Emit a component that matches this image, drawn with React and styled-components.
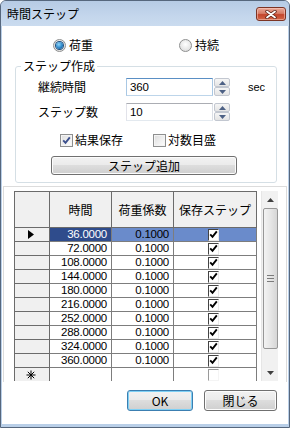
import styled, { createGlobalStyle } from "styled-components";

const GlobalStyle = createGlobalStyle`
  html, body { margin: 0; padding: 0; background: #ffffff; }
  body {
    font-family: "Noto Sans CJK JP", "Liberation Sans", sans-serif;
    font-size: 12px;
    color: #000;
  }
  * { box-sizing: border-box; }
`;

const Window = styled.div`
  width: 290px;
  height: 428px;
  display: flex;
  flex-direction: column;
  border: 1px solid #56677d;
  border-radius: 6px 6px 0 0;
  background: #b9cfe8;
  padding-bottom: 3px;
  overflow: hidden;
`;

const TitleBar = styled.div`
  height: 25px;
  flex-shrink: 0;
  display: flex;
  align-items: center;
  justify-content: space-between;
  padding: 0 3px 0 6px;
  background: linear-gradient(#b6cbe5, #c4d6ec 60%, #cadbef);
  font-size: 12px;
  line-height: 14px;
  color: #000;
`;

const CloseBtn = styled.div`
  width: 30px;
  height: 14px;
  margin-top: 1px;
  border: 1px solid #7c3425;
  border-radius: 3px;
  background: linear-gradient(#e9a898, #d77c66 45%, #c4452c 55%, #d26748);
  box-shadow: inset 0 0 0 1px rgba(255, 210, 200, 0.5);
  display: flex;
  align-items: center;
  justify-content: center;
`;

const Client = styled.div`
  flex: 1;
  margin: 0 1px;
  background: #ffffff;
  display: flex;
  flex-direction: column;
`;

const RadioRow = styled.div`
  margin-top: 10px;
  height: 18px;
  display: flex;
  align-items: center;
  padding-left: 51px;
`;

const RadioItem = styled.label`
  display: flex;
  align-items: center;
  gap: 3px;
  width: ${(p) => p.$width || "auto"};
  line-height: 14px;
`;

const RadioCircle = styled.span`
  position: relative;
  width: 13px;
  height: 13px;
  border-radius: 50%;
  border: 1px solid #8e8f8f;
  background: radial-gradient(circle at 50% 40%, #ffffff, #dedede 80%);
  &::after {
    content: "";
    display: ${(p) => (p.$checked ? "block" : "none")};
    position: absolute;
    left: 2px;
    top: 2px;
    width: 7px;
    height: 7px;
    border-radius: 50%;
    background: radial-gradient(circle at 40% 35%, #8fd6fb, #2b86c8 55%, #14467a);
    box-shadow: 0 0 0 1px #1e4e7e;
  }
`;

const Group = styled.fieldset`
  margin: 5px 0 0 13px;
  width: 262px;
  padding: 0 0 7px 0;
  border: 1px solid #d5dfe5;
  border-radius: 3px;
  min-width: 0;
`;

const Legend = styled.legend`
  margin-left: 5px;
  padding: 0 2px;
  line-height: 14px;
  font-size: 12px;
`;

const GroupBody = styled.div`
  padding-left: 22px;
  display: flex;
  flex-direction: column;
`;

const FieldRow = styled.div`
  margin-top: ${(p) => p.$top}px;
  height: 18px;
  display: flex;
  align-items: center;
`;

const FieldLabel = styled.span`
  width: 88px;
  line-height: 14px;
`;

const TextBox = styled.div`
  width: 87px;
  height: 18px;
  border: 1px solid;
  border-color: ${(p) =>
    p.$focused ? "#5a8fc4 #a9c8e4 #bdd5ea #a9c8e4" : "#abadb3 #dbdfe6 #e3e9ef #e2e3ea"};
  padding-left: 3px;
  display: flex;
  align-items: center;
  font-family: "Liberation Sans", sans-serif;
  font-size: 11.5px;
  letter-spacing: -0.2px;
`;

const Spinner = styled.div`
  width: 16px;
  height: 18px;
  margin-left: 1px;
  display: flex;
  flex-direction: column;
  gap: 0;
`;

const SpinHalf = styled.div`
  flex: 1;
  border: 1px solid #c2c7d0;
  border-radius: 2px;
  background: linear-gradient(#f6f6f6, #e4e4e4);
  display: flex;
  align-items: center;
  justify-content: center;
`;

const Unit = styled.span`
  margin-left: 18px;
  font-family: "Liberation Sans", sans-serif;
  font-size: 11px;
`;

const CheckRow = styled.div`
  margin-top: 12px;
  height: 14px;
  display: flex;
  align-items: center;
  padding-left: 22px;
`;

const CheckItem = styled.label`
  display: flex;
  align-items: center;
  gap: 2px;
  width: ${(p) => p.$width || "auto"};
  line-height: 14px;
`;

const CheckBox = styled.span`
  width: 13px;
  height: 13px;
  border: 1px solid #8e8f8f;
  background: linear-gradient(135deg, #dcdcdc, #ffffff);
  box-shadow: inset 0 0 0 1px #f4f4f4;
  display: flex;
  align-items: center;
  justify-content: center;
`;

const PushButton = styled.div`
  width: ${(p) => p.$width}px;
  height: ${(p) => p.$height || 21}px;
  margin-left: ${(p) => p.$left || 0}px;
  margin-top: ${(p) => p.$top || 0}px;
  border: 1px solid ${(p) => (p.$default ? "#3c7fb1" : "#707070")};
  border-radius: 3px;
  background: linear-gradient(#f2f2f2, #ebebeb 45%, #dddddd 50%, #cfcfcf);
  box-shadow: inset 0 0 0 1px ${(p) => (p.$default ? "#7fd0f5" : "#fcfcfc")};
  display: flex;
  align-items: center;
  justify-content: center;
  line-height: 14px;
  font-size: 12px;
`;

const GridPanel = styled.div`
  margin: 3px 1px 0;
  height: 196px;
  border: 1px solid #dcdcdc;
  border-bottom: none;
  padding: 4px 8px 0 10px;
  display: flex;
  gap: 4px;
  overflow: hidden;
`;

const Table = styled.div`
  width: 243px;
  height: 190px;
  overflow: hidden;
  display: grid;
  grid-template-columns: 35px 62px 62px 83px;
  grid-template-rows: 36px repeat(11, 14px);
  border-left: 1px solid #6b6b6b;
  border-top: 1px solid #6b6b6b;
  align-self: flex-start;
`;

const HeadCell = styled.div`
  background: #f0f0f0;
  border-right: 1px solid #6b6b6b;
  border-bottom: 1px solid #6b6b6b;
  display: flex;
  align-items: center;
  justify-content: center;
  font-size: 12px;
  line-height: 14px;
  padding-top: 1px;
`;

const RowHead = styled.div`
  background: #f0f0f0;
  border-right: 1px solid #6b6b6b;
  border-bottom: 1px solid #6b6b6b;
  display: flex;
  align-items: center;
  justify-content: center;
  padding-right: 3px;
`;

const Cell = styled.div`
  background: ${(p) => (p.$sel === "dark" ? "#2f4c8c" : p.$sel === "light" ? "#6a8bcb" : "#ffffff")};
  color: ${(p) => (p.$sel === "dark" ? "#ffffff" : "#000000")};
  border-right: 1px solid #7d7d7d;
  border-bottom: 1px solid #7d7d7d;
  display: flex;
  align-items: center;
  justify-content: ${(p) => (p.$center ? "center" : "flex-end")};
  padding-right: ${(p) => (p.$center ? "4px" : "4px")};
  font-family: "Liberation Sans", sans-serif;
  font-size: 11.5px;
  letter-spacing: -0.25px;
  line-height: 13px;
`;

const GridCheck = styled.span`
  width: 11px;
  height: 12px;
  background: #ffffff;
  border-style: solid;
  border-width: 1px;
  border-color: ${(p) => (p.$empty ? "#9a9a9a #f4f4f4 #f4f4f4 #9a9a9a" : "#444 #e8e8e8 #e8e8e8 #444")};
  display: flex;
  align-items: center;
  justify-content: center;
`;

const ScrollBar = styled.div`
  width: 17px;
  height: 190px;
  background: #f1f1f1;
  border-left: 1px solid #e6e6e6;
  display: flex;
  flex-direction: column;
  align-items: center;
  align-self: flex-start;
`;

const ScrollArrow = styled.div`
  height: 17px;
  width: 100%;
  display: flex;
  align-items: center;
  justify-content: center;
`;

const ScrollThumb = styled.div`
  width: 15px;
  height: 141px;
  border: 1px solid #979797;
  border-radius: 2px;
  background: linear-gradient(90deg, #f3f3f3, #e6e6e6 50%, #d6d6d6);
  display: flex;
  flex-direction: column;
  align-items: center;
  justify-content: center;
  gap: 2px;
`;

const Grip = styled.span`
  width: 7px;
  height: 1px;
  background: #7b7b7b;
`;

const ScrollTrack = styled.div`
  flex: 1;
`;

const ButtonRow = styled.div`
  margin-top: 8px;
  display: flex;
  justify-content: flex-end;
  gap: 11px;
  padding-right: 11px;
`;

const CheckMark = ({ color = "#000", size = 9 }) => (
  <svg width={size} height={size} viewBox="0 0 9 9">
    <path d="M1.2 4.4 L3.5 6.8 L7.8 1.3" fill="none" stroke={color} strokeWidth="1.9" />
  </svg>
);

const SpinArrow = ({ up }) => (
  <svg width="7" height="4" viewBox="0 0 7 4">
    <polygon points={up ? "0,4 3.5,0 7,4" : "0,0 3.5,4 7,0"} fill="#4d6185" />
  </svg>
);

const NumField = ({ label, value, focused, unit }) => (
  <>
    <FieldLabel>{label}</FieldLabel>
    <TextBox $focused={focused}>{value}</TextBox>
    <Spinner>
      <SpinHalf>
        <SpinArrow up />
      </SpinHalf>
      <SpinHalf>
        <SpinArrow />
      </SpinHalf>
    </Spinner>
    {unit && <Unit>{unit}</Unit>}
  </>
);

const rows = [36, 72, 108, 144, 180, 216, 252, 288, 324, 360];

export default function App() {
  return (
    <>
      <GlobalStyle />
      <Window>
        <TitleBar>
          <span>時間ステップ</span>
          <CloseBtn>
            <svg width="12" height="9" viewBox="0 0 12 9">
              <path d="M2 1.5 L10 7.5 M10 1.5 L2 7.5" stroke="#5a2015" strokeWidth="3.4" strokeLinecap="round" />
              <path d="M2 1.5 L10 7.5 M10 1.5 L2 7.5" stroke="#ffffff" strokeWidth="1.8" strokeLinecap="round" />
            </svg>
          </CloseBtn>
        </TitleBar>
        <Client>
          <RadioRow>
            <RadioItem $width="126px">
              <RadioCircle $checked />
              荷重
            </RadioItem>
            <RadioItem>
              <RadioCircle />
              持続
            </RadioItem>
          </RadioRow>

          <Group>
            <Legend>ステップ作成</Legend>
            <GroupBody>
              <FieldRow $top={5}>
                <NumField label="継続時間" value="360" focused unit="sec" />
              </FieldRow>
              <FieldRow $top={7}>
                <NumField label="ステップ数" value="10" />
              </FieldRow>
              <CheckRow>
                <CheckItem $width="93px">
                  <CheckBox>
                    <CheckMark color="#3b4f8c" />
                  </CheckBox>
                  結果保存
                </CheckItem>
                <CheckItem>
                  <CheckBox />
                  対数目盛
                </CheckItem>
              </CheckRow>
              <PushButton $width={186} $height={19} $left={13} $top={9}>
                ステップ追加
              </PushButton>
            </GroupBody>
          </Group>

          <GridPanel>
            <Table>
              <HeadCell />
              <HeadCell>時間</HeadCell>
              <HeadCell>荷重係数</HeadCell>
              <HeadCell>保存ステップ</HeadCell>
              {rows.map((t, i) => {
                const sel = i === 0;
                return [
                  <RowHead key={`h${t}`}>
                    {sel && (
                      <svg width="6" height="9" viewBox="0 0 6 9">
                        <polygon points="0,0 6,4.5 0,9" fill="#000" />
                      </svg>
                    )}
                  </RowHead>,
                  <Cell key={`t${t}`} $sel={sel ? "dark" : ""}>
                    {t.toFixed(4)}
                  </Cell>,
                  <Cell key={`f${t}`} $sel={sel ? "light" : ""}>
                    0.1000
                  </Cell>,
                  <Cell key={`c${t}`} $sel={sel ? "light" : ""} $center>
                    <GridCheck>
                      <CheckMark />
                    </GridCheck>
                  </Cell>,
                ];
              })}
              <RowHead>
                <svg width="10" height="10" viewBox="0 0 10 10">
                  <path d="M5 0.5 V9.5 M0.5 5 H9.5 M1.8 1.8 L8.2 8.2 M8.2 1.8 L1.8 8.2" stroke="#000" strokeWidth="1" />
                </svg>
              </RowHead>
              <Cell />
              <Cell />
              <Cell $center>
                <GridCheck $empty />
              </Cell>
            </Table>
            <ScrollBar>
              <ScrollArrow>
                <svg width="7" height="4" viewBox="0 0 7 4">
                  <polygon points="0,4 3.5,0 7,4" fill="#404040" />
                </svg>
              </ScrollArrow>
              <ScrollThumb>
                <Grip />
                <Grip />
                <Grip />
              </ScrollThumb>
              <ScrollTrack />
              <ScrollArrow>
                <svg width="7" height="4" viewBox="0 0 7 4">
                  <polygon points="0,0 3.5,4 7,0" fill="#404040" />
                </svg>
              </ScrollArrow>
            </ScrollBar>
          </GridPanel>

          <ButtonRow>
            <PushButton $width={66} $default>
              OK
            </PushButton>
            <PushButton $width={73}>閉じる</PushButton>
          </ButtonRow>
        </Client>
      </Window>
    </>
  );
}
